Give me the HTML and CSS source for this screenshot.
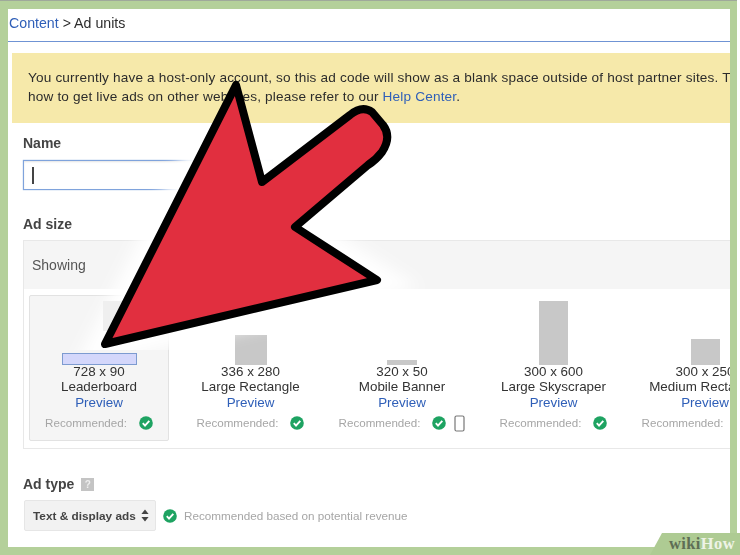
FILE: index.html
```html
<!DOCTYPE html>
<html lang="en">
<head>
<meta charset="utf-8">
<title>Ad units</title>
<link rel="stylesheet" href="styles.css">
</head>
<body>
<svg class="defs" width="0" height="0" aria-hidden="true">
  <symbol id="ok" viewBox="0 0 14 14">
    <circle cx="7" cy="7" r="6.8" fill="#1ea362"/>
    <path d="M3.8 7.2 6 9.6 10.3 4.8" fill="none" stroke="#fff" stroke-width="1.9"/>
  </symbol>
  <filter id="glow" x="-30%" y="-30%" width="160%" height="160%"><feGaussianBlur stdDeviation="8"/></filter>
  <clipPath id="below-notice"><rect x="8" y="124" width="722" height="226"/></clipPath>
</svg>
<div class="stage">
  <div class="frame">
    <main class="panel">
      <header class="crumbs"><a class="link">Content</a> &gt; Ad units</header>
      <div class="notice">
        <p class="notice-line">You currently have a host-only account, so this ad code will show as a blank space outside of host partner sites. T</p>
        <p class="notice-line">how to get live ads on other websites, please refer to our <a class="link">Help Center</a>.</p>
      </div>
      <section class="form">
        <h2 class="label label-name">Name</h2>
        <div class="input"><span class="caret"></span></div>
        <h2 class="label label-size">Ad size</h2>
        <div class="sizes">
          <div class="sizes-head">Showing</div>
          <div class="cards">
            <article class="card card-on">
              <div class="thumb"><span class="box box-leader"></span></div>
              <div class="dims">728 x 90</div>
              <div class="dims">Leaderboard</div>
              <a class="link preview">Preview</a>
              <div class="rec"><span>Recommended:</span><svg class="ok"><use href="#ok"/></svg></div>
            </article>
            <article class="card">
              <div class="thumb"><span class="box box-rect"></span></div>
              <div class="dims">336 x 280</div>
              <div class="dims">Large Rectangle</div>
              <a class="link preview">Preview</a>
              <div class="rec"><span>Recommended:</span><svg class="ok"><use href="#ok"/></svg></div>
            </article>
            <article class="card">
              <div class="thumb"><span class="box box-banner"></span></div>
              <div class="dims">320 x 50</div>
              <div class="dims">Mobile Banner</div>
              <a class="link preview">Preview</a>
              <div class="rec"><span>Recommended:</span><svg class="ok"><use href="#ok"/></svg>
                <svg class="phone" viewBox="0 0 11 17"><rect x="1" y="1" width="9" height="15" rx="1.5" fill="none" stroke="#777" stroke-width="1.2"/></svg></div>
            </article>
            <article class="card">
              <div class="thumb"><span class="box box-sky"></span></div>
              <div class="dims">300 x 600</div>
              <div class="dims">Large Skyscraper</div>
              <a class="link preview">Preview</a>
              <div class="rec"><span>Recommended:</span><svg class="ok"><use href="#ok"/></svg></div>
            </article>
            <article class="card">
              <div class="thumb"><span class="box box-med"></span></div>
              <div class="dims">300 x 250</div>
              <div class="dims">Medium Rectangle</div>
              <a class="link preview">Preview</a>
              <div class="rec"><span>Recommended:</span><svg class="ok"><use href="#ok"/></svg>
                <svg class="phone" viewBox="0 0 11 17"><rect x="1" y="1" width="9" height="15" rx="1.5" fill="none" stroke="#777" stroke-width="1.2"/></svg></div>
            </article>
          </div>
        </div>
        <h2 class="label label-type">Ad type <span class="help">?</span></h2>
        <div class="type-row">
          <div class="select">Text &amp; display ads
            <svg class="updown" viewBox="0 0 8 13"><path d="M4 0.5 7.6 5H0.4ZM4 12.5 0.4 8H7.6Z" fill="#444"/></svg>
          </div>
          <svg class="ok"><use href="#ok"/></svg>
          <span class="type-note">Recommended based on potential revenue</span>
        </div>
      </section>
    </main>
  </div>
  <svg class="arrow" width="740" height="555" viewBox="0 0 740 555" aria-hidden="true">
    <g clip-path="url(#below-notice)">
      <path d="M236 85 262 182 350 115Q362 105 372 112L383 125Q392 137 382 152Q376 160 368 165L295 227 377 280 105 344Z" fill="#fff" stroke="#fff" stroke-width="34" filter="url(#glow)"/>
    </g>
    <rect x="103" y="301" width="32" height="30" fill="#efefef"/>
    <path d="M236 85 262 182 350 115Q362 105 372 112L383 125Q392 137 382 152Q376 160 368 165L295 227 377 280 105 344Z" fill="#e12f3f" stroke="#000" stroke-width="8" stroke-linejoin="round"/>
  </svg>
  <div class="badge"><span class="wiki">wiki</span><span class="how">How</span></div>
</div>
</body>
</html>
```
FILE: styles.css
```css
* { box-sizing: border-box; }
html, body { margin: 0; padding: 0; }
body { background: #fff; font-family: "Liberation Sans", Arial, sans-serif; color: #2c2c2c; overflow: hidden; }
.defs { position: absolute; }
.stage { position: relative; width: 740px; height: 555px; overflow: hidden; }
.frame { width: 737px; height: 555px; padding: 8px 7px 8px 8px; background: #b4d09a; border-top: 1px solid #9fa99a; }
.panel { width: 722px; height: 538px; background: #fff; overflow: hidden; filter: blur(.35px); }
.link { color: #2f5fb8; }

.crumbs { height: 33px; padding: 6px 0 0 1px; font-size: 14.2px; line-height: 16px; border-bottom: 1px solid #6f93d4; }
.notice { margin: 11px 0 0 4px; height: 70px; padding: 17px 0 0 16px; background: #f6e9aa; white-space: nowrap; overflow: hidden; }
.notice-line { margin: 0 0 3px; font-size: 13.6px; line-height: 16px; letter-spacing: .17px; }

.form { padding-left: 15px; }
.label { margin: 0; font-size: 14px; line-height: 16px; font-weight: bold; color: #444; display: flex; align-items: center; gap: 7px; }
.label-name { margin-top: 12px; }
.label-size { margin-top: 26px; }
.label-type { margin-top: 27px; }
.input { margin-top: 9px; width: 250px; height: 30px; border: 1px solid #7fa3dc; padding: 6px 8px; box-shadow: 0 0 1px #7fa3dc, inset 0 1px 2px #e4e4e4; }
.caret { display: block; width: 1.5px; height: 17px; background: #444; }

.sizes { margin-top: 8px; height: 209px; border: 1px solid #e8e8e8; border-right: 0; overflow: hidden; }
.sizes-head { height: 48px; padding: 16px 0 0 8px; font-size: 14px; line-height: 17px; background: #f5f5f5; color: #555; }
.cards { display: flex; gap: 11.5px; padding: 6px 0 0 5px; width: 900px; }
.card { flex: none; width: 140px; height: 146px; text-align: center; border: 1px solid transparent; border-radius: 2px; }
.card-on { background: #f5f5f5; border-color: #e2e2e2; }
.thumb { height: 69px; display: flex; justify-content: center; align-items: flex-end; }
.box { display: block; background: #c8c8c8; }
.box-leader { width: 75px; height: 12px; background: #d4d7fb; border: 1px solid #7d9bd0; }
.box-rect { width: 32px; height: 30px; }
.box-banner { width: 30px; height: 5px; }
.box-sky { width: 29px; height: 64px; }
.box-med { width: 29px; height: 26px; }
.dims { font-size: 13.4px; line-height: 14.5px; color: #333; white-space: nowrap; }
.dims:first-of-type { margin-top: 1px; line-height: 14px; }
.preview { display: block; margin-top: 1px; font-size: 13.4px; line-height: 16px; }
.rec { margin-top: 4px; height: 16px; display: flex; justify-content: center; align-items: center; gap: 12px; font-size: 11.6px; line-height: 16px; color: #a6a6a6; white-space: nowrap; }
.ok { flex: none; width: 14px; height: 14px; }
.phone { flex: none; width: 11px; height: 17px; margin-left: -4px; }

.help { display: inline-block; width: 13px; height: 13px; background: #c4c4c4; color: #eee; font-size: 10px; line-height: 13px; text-align: center; }
.type-row { margin: 8px 0 0 1px; display: flex; align-items: center; gap: 7px; }
.select { width: 132px; height: 31px; padding: 0 6px 0 8px; display: flex; align-items: center; justify-content: space-between; background: #f2f2f2; border: 1px solid #e6e6e6; border-radius: 2px; font-size: 11.8px; font-weight: bold; color: #444; white-space: nowrap; }
.updown { width: 8px; height: 13px; }
.type-note { font-size: 11.7px; color: #a6a6a6; white-space: nowrap; }

.arrow { position: absolute; left: 0; top: 0; }
.badge { position: absolute; right: 0; bottom: 0; width: 90px; height: 22px; padding: 1px 5px 0 0; text-align: right; background: #aecb93; clip-path: polygon(12px 0, 100% 0, 100% 100%, 0 100%); font-family: "Liberation Serif", serif; font-size: 16.5px; line-height: 20px; letter-spacing: .4px; font-weight: bold; }
.wiki { color: #5e6e55; }
.how { color: #eef3e6; }
```
